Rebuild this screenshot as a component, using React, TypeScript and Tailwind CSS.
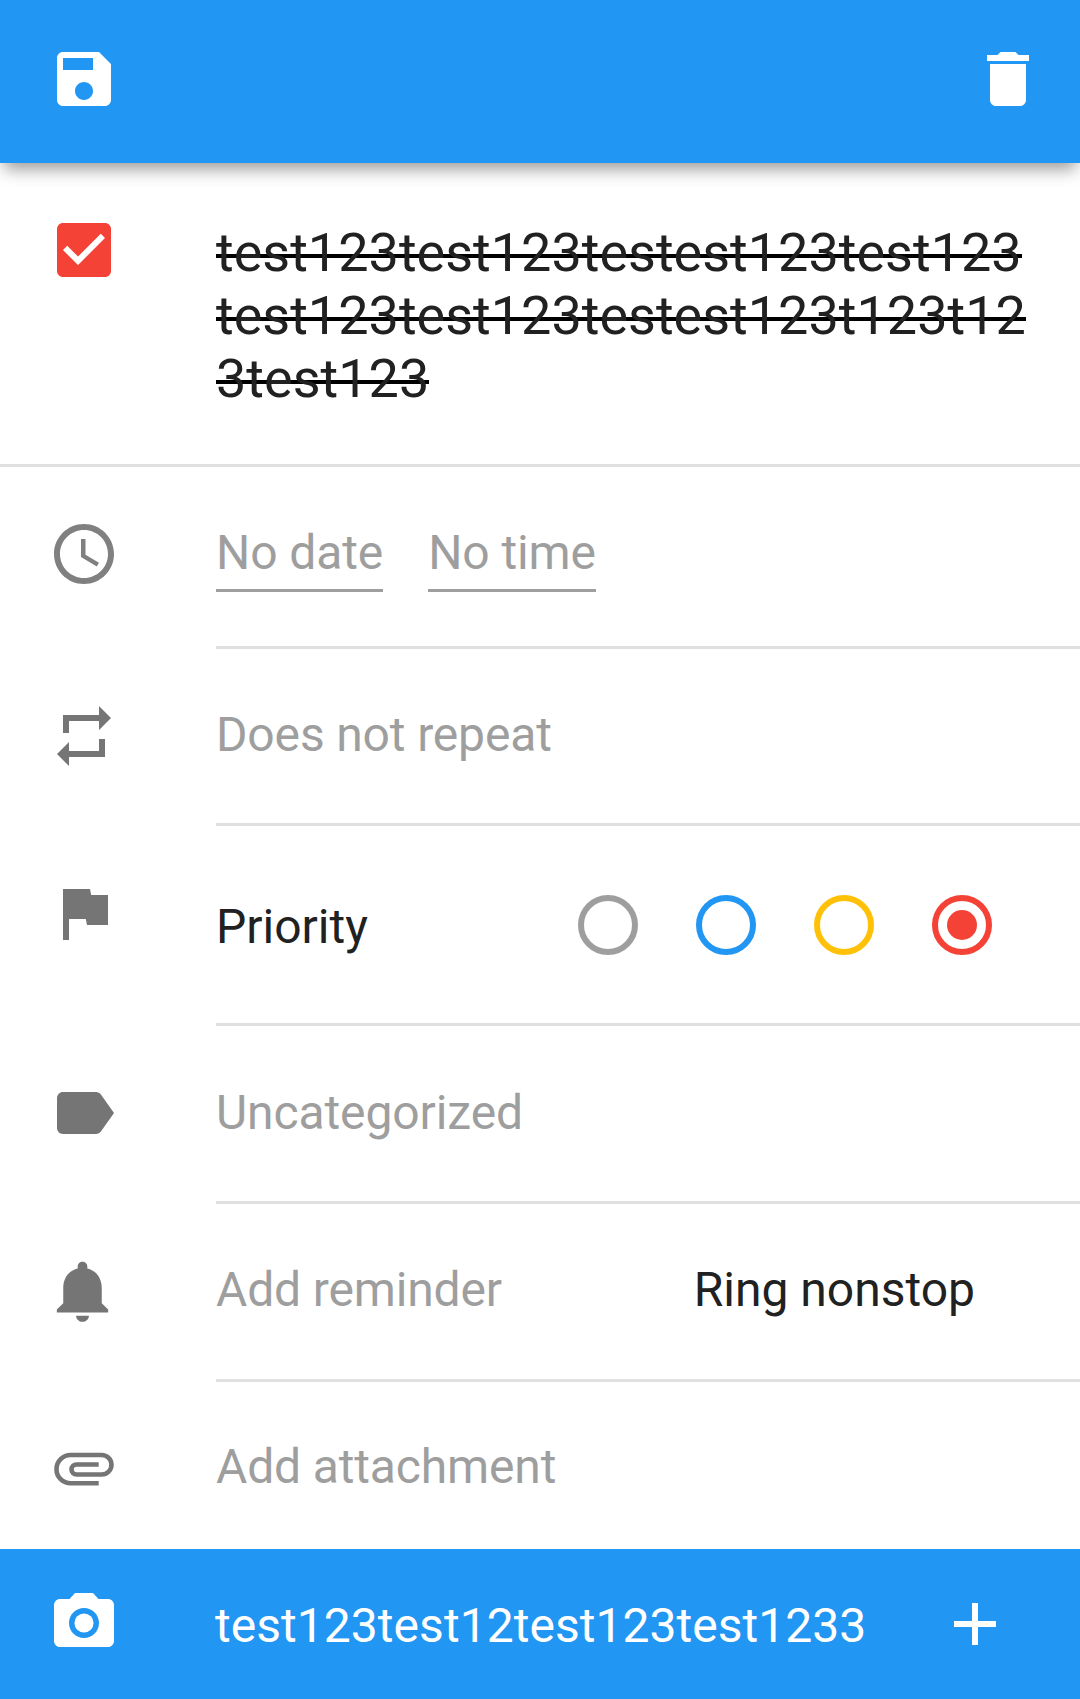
import { ReactNode } from "react";

const ROBOTO = "font-['Roboto',sans-serif]";

function Icon({ children, className = "fill-[#757575]" }: { children: ReactNode; className?: string }) {
  return (
    <svg viewBox="0 0 24 24" className={`block h-[72px] w-[72px] ${className}`} aria-hidden="true">
      {children}
    </svg>
  );
}

function Row({ icon, height, iconTop = "pt-[51px]", children }: { icon: ReactNode; height: string; iconTop?: string; children: ReactNode }) {
  return (
    <div className={`flex ${height}`}>
      <div className={`w-[216px] shrink-0 pl-[48px] ${iconTop}`}>{icon}</div>
      <div className="flex-1 border-b-[3px] border-[#e0e0e0]">{children}</div>
    </div>
  );
}

function Priority({ ring, selected }: { ring: string; selected?: boolean }) {
  return (
    <div className={`flex h-[60px] w-[60px] items-center justify-center rounded-full border-[6px] ${ring}`}>
      {selected ? <div className="h-[30px] w-[30px] rounded-full bg-[#f44336]" /> : null}
    </div>
  );
}

export default function App() {
  return (
    <div className={`flex h-[1699px] w-[1080px] flex-col overflow-hidden bg-white ${ROBOTO}`}>
      <header className="relative z-10 flex h-[163px] shrink-0 items-start justify-between bg-[#2196f3] pl-[48px] pr-[36px] pt-[43px] shadow-[0_10px_16px_-4px_rgba(0,0,0,0.4)]">
        <Icon className="fill-white">
          <path d="M17 3H5c-1.11 0-2 .9-2 2v14c0 1.1.89 2 2 2h14c1.1 0 2-.9 2-2V7l-4-4zm-5 16c-1.66 0-3-1.34-3-3s1.34-3 3-3 3 1.34 3 3-1.34 3-3 3zm3-10H5V5h10v4z" />
        </Icon>
        <Icon className="fill-white">
          <path d="M6 19c0 1.1.9 2 2 2h8c1.1 0 2-.9 2-2V7H6v12zM19 4h-3.5l-1-1h-5l-1 1H5v2h14V4z" />
        </Icon>
      </header>

      <section className="flex h-[304px] shrink-0 border-b-[3px] border-[#e0e0e0]">
        <div className="w-[216px] shrink-0 pl-[48px] pt-[51px]">
          <Icon className="fill-[#f44336]">
            <path d="M19 3H5c-1.11 0-2 .9-2 2v14c0 1.1.89 2 2 2h14c1.11 0 2-.9 2-2V5c0-1.1-.89-2-2-2z" />
            <path className="fill-white" d="M10 17l-5-5 1.41-1.41L10 14.17l7.59-7.59L19 8l-9 9z" />
          </Icon>
        </div>
        <div className="w-[815px] pt-[58px] text-[54px] leading-[63px] text-[#212121] break-all">
          {/* strike bar sits lower than the font's own line-through, so it's a per-line background */}
          <span className="bg-[linear-gradient(#000,#000)] bg-no-repeat bg-size-[100%_4px] bg-position-[0_33px] box-decoration-clone">
            test123test123testest123test123test123test123testest123t123t123test123
          </span>
        </div>
      </section>

      <Row
        height="h-[182px]"
        icon={
          <Icon className="fill-[#808080]">
            <path d="M11.99 2C6.47 2 2 6.48 2 12s4.47 10 9.99 10C17.52 22 22 17.52 22 12S17.52 2 11.99 2zM12 20c-4.42 0-8-3.58-8-8s3.58-8 8-8 8 3.58 8 8-3.58 8-8 8z" />
            <path d="M12.5 7H11v6l5.25 3.15.75-1.23-4.5-2.67z" />
          </Icon>
        }
      >
        <div className="flex gap-[45px] pt-[58px] text-[48px] leading-[56px] tracking-[-0.1px] text-[#9e9e9e]">
          <span className="border-b-[3px] border-[#9e9e9e] pb-[8px]">No date</span>
          <span className="border-b-[3px] border-[#9e9e9e] pb-[8px]">No time</span>
        </div>
      </Row>

      <Row
        height="h-[177px]"
        icon={
          <Icon>
            <path d="M7 7h10v3l4-4-4-4v3H5v6h2V7zm10 10H7v-3l-4 4 4 4v-3h12v-6h-2v4z" />
          </Icon>
        }
      >
        <div className="pt-[58px] text-[48px] leading-[56px] tracking-[-0.15px] text-[#9e9e9e]">Does not repeat</div>
      </Row>

      <Row
        height="h-[200px]"
        icon={
          <Icon>
            <path d="M14.4 6L14 4H5v17h2v-7h5.6l.4 2h7V6z" />
          </Icon>
        }
      >
        <div className="flex items-center pr-[88px] pt-[69px]">
          <span className="flex-1 pt-[4px] text-[48px] leading-[56px] text-[#212121]">Priority</span>
          <div className="flex gap-[58px]">
            <Priority ring="border-[#9e9e9e]" />
            <Priority ring="border-[#2196f3]" />
            <Priority ring="border-[#ffc107]" />
            <Priority ring="border-[#f44336]" selected />
          </div>
        </div>
      </Row>

      <Row
        height="h-[178px]"
        icon={
          <Icon>
            <path d="M17.63 5.84C17.27 5.33 16.67 5 16 5L5 5.01C3.9 5.01 3 5.9 3 7v10c0 1.1.9 1.99 2 1.99L16 19c.67 0 1.27-.33 1.63-.84L22 12l-4.37-6.16z" />
          </Icon>
        }
      >
        <div className="pt-[59px] text-[48px] leading-[56px] tracking-[-0.1px] text-[#9e9e9e]">Uncategorized</div>
      </Row>

      <Row
        height="h-[178px]"
        iconTop="pt-[50px]"
        icon={
          <svg viewBox="0 0 24 24" preserveAspectRatio="none" className="-ml-[4px] block h-[74px] w-[77px] fill-[#757575]" aria-hidden="true">
            <path d="M12 22c1.1 0 2-.9 2-2h-4c0 1.1.9 2 2 2zm6-6v-5c0-3.07-1.63-5.64-4.5-6.32V4c0-.83-.67-1.5-1.5-1.5s-1.5.67-1.5 1.5v.68C7.64 5.36 6 7.92 6 11v5l-2 2v1h16v-1l-2-2z" />
          </svg>
        }
      >
        <div className="flex justify-between pr-[105px] pt-[58px] text-[48px] leading-[56px]">
          <span className="tracking-[-0.15px] text-[#9e9e9e]">Add reminder</span>
          <span className="text-[#212121]">Ring nonstop</span>
        </div>
      </Row>

      <div className="flex h-[167px] shrink-0">
        <div className="w-[216px] shrink-0 pl-[48px] pt-[46px]">
          <svg viewBox="18 8 72 72" className="block h-[72px] w-[72px] fill-none stroke-[#757575] stroke-[4.6]" aria-hidden="true">
            <path d="M68.7 63.3H40.65A14.15 14.15 0 0 1 40.65 35H71.75A9.75 9.75 0 0 1 71.75 54.5H46.5A5 5 0 0 1 46.5 44.5H68.7" />
          </svg>
        </div>
        <div className="pt-[57px] text-[48px] leading-[56px] tracking-[-0.15px] text-[#9e9e9e]">Add attachment</div>
      </div>

      <footer className="flex h-[150px] shrink-0 items-start bg-[#2196f3]">
        <div className="w-[215px] shrink-0 pl-[48px] pt-[38px]">
          <Icon className="fill-white">
            <path d="M9 2L7.17 4H4c-1.1 0-2 .9-2 2v12c0 1.1.9 2 2 2h16c1.1 0 2-.9 2-2V6c0-1.1-.9-2-2-2h-3.17L15 2H9zm3 15c-2.76 0-5-2.24-5-5s2.24-5 5-5 5 2.24 5 5-2.24 5-5 5z" />
            <circle cx="12" cy="12" r="3.2" />
          </Icon>
        </div>
        <div className="flex-1 pt-[49px] text-[48px] leading-[56px] tracking-[0.04px] text-white">test123test12test123test1233</div>
        <div className="pr-[69px] pt-[39px]">
          <Icon className="fill-white">
            <path d="M19 13h-6v6h-2v-6H5v-2h6V5h2v6h6v2z" />
          </Icon>
        </div>
      </footer>
    </div>
  );
}
